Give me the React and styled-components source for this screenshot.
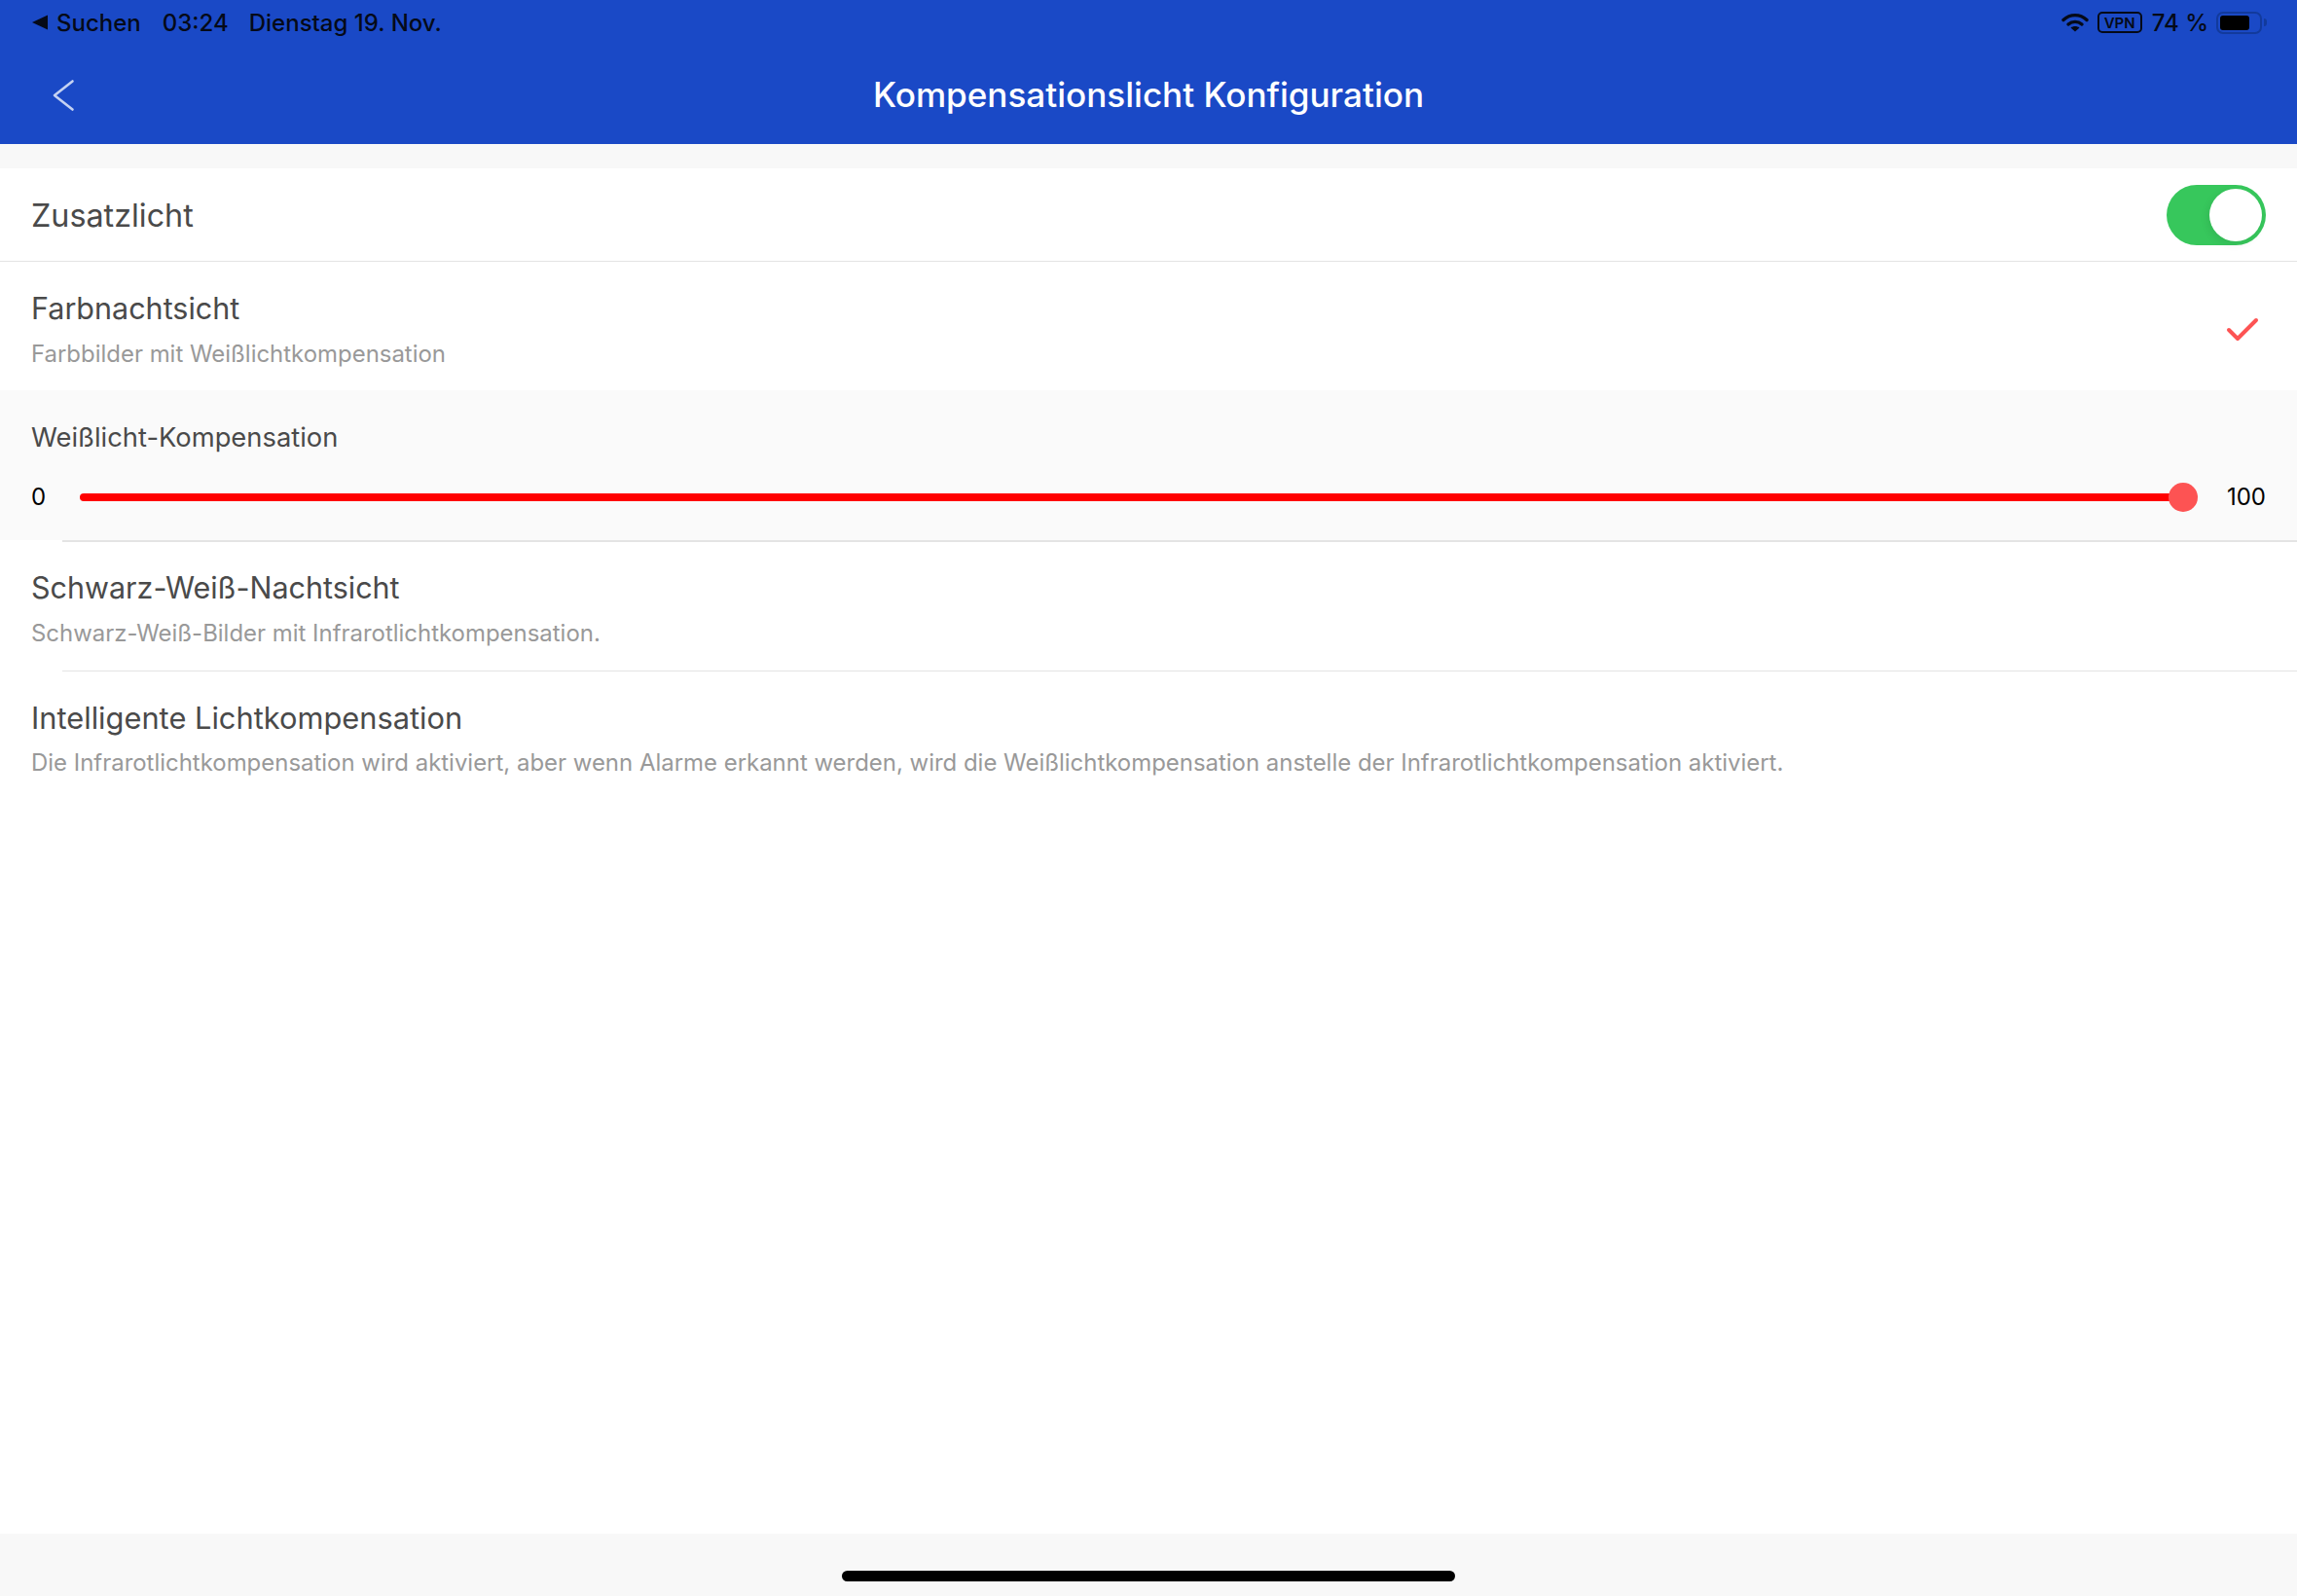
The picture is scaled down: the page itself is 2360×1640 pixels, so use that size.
import React from "react";
import styled, { createGlobalStyle } from "styled-components";

const GlobalStyle = createGlobalStyle`
  html, body {
    margin: 0;
    padding: 0;
    background: #fff;
    font-family: "Inter", "Liberation Sans", sans-serif;
  }
`;

function App() {
  return (
    <Page>
      <GlobalStyle />
      <Header>
        <StatusBar>
          <StatusGroup>
            <BackTriangle viewBox="0 0 16 16">
              <path d="M0 8 L16 0.5 V15.5 Z" fill="#050a18" />
            </BackTriangle>
            <StatusText>Suchen</StatusText>
            <StatusText $left={22}>03:24</StatusText>
            <StatusText $left={21}>Dienstag 19. Nov.</StatusText>
          </StatusGroup>
          <StatusGroup>
            <svg width="28" height="20" viewBox="0 0 28 20">
              <path d="M2 7.5 C9 1 19 1 26 7.5" fill="none" stroke="#050a18" strokeWidth="3.4" strokeLinecap="round" />
              <path d="M7 12 C11 8.5 17 8.5 21 12" fill="none" stroke="#050a18" strokeWidth="3.4" strokeLinecap="round" />
              <path d="M14 19.5 L9.5 15.5 C12 13.5 16 13.5 18.5 15.5 Z" fill="#050a18" />
            </svg>
            <VpnBadge>VPN</VpnBadge>
            <StatusText $left={10}>74 %</StatusText>
            <Battery>
              <BatteryFill />
            </Battery>
            <BatteryCap />
          </StatusGroup>
        </StatusBar>
        <NavBar>
          <BackButton width="24" height="34" viewBox="0 0 24 34">
            <path d="M21.5 2.5 L3 17 L21.5 31.5" fill="none" stroke="#c5d2f2" strokeWidth="2.6" strokeLinecap="round" strokeLinejoin="round" />
          </BackButton>
          <Title>Kompensationslicht Konfiguration</Title>
        </NavBar>
      </Header>
      <Gap />
      <SwitchRow>
        <SwitchTitle>Zusatzlicht</SwitchTitle>
        <Toggle>
          <ToggleKnob />
        </Toggle>
      </SwitchRow>
      <OptionRow>
        <OptionText $top={6}>
          <RowTitle>Farbnachtsicht</RowTitle>
          <RowSub>Farbbilder mit Weißlichtkompensation</RowSub>
        </OptionText>
        <CheckMark width="36" height="28" viewBox="0 0 36 28">
          <path d="M4 14 L13 23 L32 4" fill="none" stroke="#fd5353" strokeWidth="4" strokeLinecap="round" strokeLinejoin="round" />
        </CheckMark>
      </OptionRow>
      <SliderPanel>
        <SliderLabel>Weißlicht-Kompensation</SliderLabel>
        <SliderRow>
          <SliderValue>0</SliderValue>
          <Track>
            <Thumb />
          </Track>
          <SliderValue>100</SliderValue>
        </SliderRow>
      </SliderPanel>
      <InsetLine />
      <OptionRow>
        <OptionText $top={5}>
          <RowTitle>Schwarz-Weiß-Nachtsicht</RowTitle>
          <RowSub>Schwarz-Weiß-Bilder mit Infrarotlichtkompensation.</RowSub>
        </OptionText>
      </OptionRow>
      <InsetLine />
      <OptionRow>
        <OptionText $top={5}>
          <RowTitle $size={30.8}>Intelligente Lichtkompensation</RowTitle>
          <RowSub>
            Die Infrarotlichtkompensation wird aktiviert, aber wenn Alarme erkannt werden, wird die
            Weißlichtkompensation anstelle der Infrarotlichtkompensation aktiviert.
          </RowSub>
        </OptionText>
      </OptionRow>
      <Spacer />
      <Footer>
        <HomeBar />
      </Footer>
    </Page>
  );
}

const Page = styled.div`
  width: 2360px;
  height: 1640px;
  display: flex;
  flex-direction: column;
  overflow: hidden;
  background: #fff;
`;

const Header = styled.header`
  height: 148px;
  flex: none;
  background: #1a49c6;
  display: flex;
  flex-direction: column;
`;

const StatusBar = styled.div`
  height: 46px;
  padding: 0 31px 0 33px;
  display: flex;
  align-items: center;
  justify-content: space-between;
`;

const StatusGroup = styled.div`
  display: flex;
  align-items: center;
`;

const BackTriangle = styled.svg`
  width: 16px;
  height: 16px;
  margin-right: 9px;
`;

const StatusText = styled.span`
  margin-left: ${(p) => p.$left || 0}px;
  font-size: 24px;
  font-weight: 500;
  color: #050a18;
  white-space: nowrap;
`;

const VpnBadge = styled.span`
  margin-left: 9px;
  width: 46px;
  height: 22px;
  box-sizing: border-box;
  border: 2px solid #050a18;
  border-radius: 5px;
  display: flex;
  align-items: center;
  justify-content: center;
  font-size: 15px;
  font-weight: 600;
  color: #050a18;
`;

const Battery = styled.span`
  margin-left: 8px;
  width: 47px;
  height: 23px;
  box-sizing: border-box;
  border: 2px solid #123a9c;
  border-radius: 7px;
  padding: 2px;
  display: flex;
`;

const BatteryFill = styled.span`
  width: 30px;
  background: #000;
  border-radius: 3px;
`;

const BatteryCap = styled.span`
  width: 3px;
  height: 8px;
  margin-left: 2px;
  background: #123a9c;
  border-radius: 0 3px 3px 0;
`;

const NavBar = styled.div`
  position: relative;
  flex: 1;
  display: flex;
  align-items: center;
  justify-content: center;
`;

const BackButton = styled.svg`
  position: absolute;
  left: 53px;
  top: 35px;
`;

const Title = styled.h1`
  margin: 0;
  font-size: 35.1px;
  font-weight: 500;
  color: #fff;
  white-space: nowrap;
`;

const Gap = styled.div`
  height: 25px;
  flex: none;
  background: #f8f8f8;
`;

const SwitchRow = styled.div`
  height: 95px;
  flex: none;
  box-sizing: content-box;
  border-bottom: 1.5px solid #e4e4e4;
  padding: 0 32px;
  display: flex;
  align-items: center;
  justify-content: space-between;
`;

const SwitchTitle = styled.div`
  padding-top: 2px;
  font-size: 32.3px;
  line-height: 40px;
  color: #4a4a4a;
`;

const OptionRow = styled.div`
  height: 132px;
  flex: none;
  padding: 0 32px;
  box-sizing: border-box;
  display: flex;
  align-items: center;
  justify-content: space-between;
`;

const OptionText = styled.div`
  padding-top: ${(p) => p.$top}px;
`;

const CheckMark = styled.svg`
  margin: 8px 6px 0 0;
`;

const RowTitle = styled.div`
  font-size: ${(p) => p.$size || 30.5}px;
  font-weight: 400;
  line-height: 40px;
  color: #4a4a4a;
`;

const RowSub = styled.div`
  margin-top: 11.5px;
  font-size: 23.94px;
  font-weight: 400;
  line-height: 30px;
  color: #999;
`;

const Toggle = styled.div`
  width: 102px;
  height: 62px;
  border-radius: 31px;
  background: #37c75c;
  display: flex;
  align-items: center;
  justify-content: flex-end;
  padding-right: 4px;
  box-sizing: border-box;
`;

const ToggleKnob = styled.div`
  width: 54px;
  height: 54px;
  border-radius: 50%;
  background: #fff;
  box-shadow: -2px 3px 8px rgba(0, 0, 0, 0.08);
`;

const SliderPanel = styled.div`
  height: 154px;
  flex: none;
  box-sizing: border-box;
  padding: 31px 32px 0;
  background: #fafafa;
`;

const SliderLabel = styled.div`
  font-size: 27.35px;
  line-height: 36px;
  color: #4a4a4a;
`;

const SliderRow = styled.div`
  margin-top: 24px;
  height: 36px;
  display: flex;
  align-items: center;
  justify-content: space-between;
`;

const SliderValue = styled.span`
  font-size: 24px;
  color: #000;
`;

const Track = styled.div`
  position: relative;
  flex: 1;
  height: 8px;
  margin: 2px 45px 0 35px;
  background: #ff0000;
  border-radius: 4px;
`;

const Thumb = styled.div`
  position: absolute;
  right: -15px;
  top: -11px;
  width: 30px;
  height: 30px;
  border-radius: 50%;
  background: #fd5353;
`;

const InsetLine = styled.div`
  height: 1.5px;
  flex: none;
  margin-left: 64px;
  background: #e4e4e4;
`;

const Spacer = styled.div`
  flex: 1;
`;

const Footer = styled.div`
  height: 64px;
  flex: none;
  background: #f8f8f8;
  display: flex;
  justify-content: center;
`;

const HomeBar = styled.div`
  width: 630px;
  height: 11px;
  margin-top: 38px;
  border-radius: 6px;
  background: #000;
`;

export default App;
